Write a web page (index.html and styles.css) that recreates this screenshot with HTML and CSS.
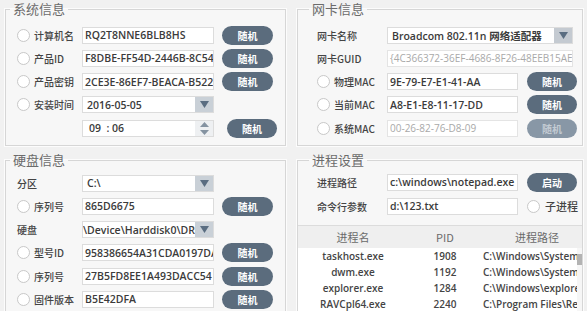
FILE: index.html
```html
<!DOCTYPE html>
<html>
<head>
    <meta charset="utf-8">
    <link rel="stylesheet" href="styles.css">
</head>
<body>
    <div class="main">
        <!-- 系统信息 -->
        <fieldset class="panel">
            <legend>系统信息</legend>
            <div class="rows">
                <div class="row">
                    <span class="lead"><i class="radio"></i>计算机名</span>
                    <span class="field">RQ2T8NNE6BLB8HS</span>
                    <button class="btn">随机</button>
                </div>
                <div class="row">
                    <span class="lead"><i class="radio"></i>产品ID</span>
                    <span class="field">F8DBE-FF54D-2446B-8C54</span>
                    <button class="btn">随机</button>
                </div>
                <div class="row">
                    <span class="lead"><i class="radio"></i>产品密钥</span>
                    <span class="field">2CE3E-86EF7-BEACA-B522</span>
                    <button class="btn">随机</button>
                </div>
                <div class="row">
                    <span class="lead"><i class="radio"></i>安装时间</span>
                    <span class="field pick"><span class="val">2016-05-05</span><span class="drop"><svg width="9" height="7" viewBox="0 0 9 7"><path d="M0 0H9L4.5 7Z"/></svg></span></span>
                </div>
                <div class="row">
                    <span class="lead"></span>
                    <span class="field pick time"><span class="val">09 &nbsp;: 06</span><span class="spin"><svg width="9" height="13" viewBox="0 0 9 13"><path d="M0 5H9L4.5 0Z"/><path d="M0 8H9L4.5 13Z"/></svg></span></span>
                    <button class="btn shift">随机</button>
                </div>
            </div>
        </fieldset>

        <!-- 网卡信息 -->
        <fieldset class="panel right">
            <legend>网卡信息</legend>
            <div class="rows">
                <div class="row">
                    <span class="lead">网卡名称</span>
                    <span class="field wide pick"><span class="val">Broadcom 802.11n 网络适配器</span><span class="drop grey"><svg width="9" height="7" viewBox="0 0 9 7"><path d="M0 0H9L4.5 7Z"/></svg></span></span>
                </div>
                <div class="row">
                    <span class="lead">网卡GUID</span>
                    <span class="field wide off">{4C366372-36EF-4686-8F26-48EEB15AE1D0}</span>
                </div>
                <div class="row">
                    <span class="lead"><i class="radio"></i>物理MAC</span>
                    <span class="field">9E-79-E7-E1-41-AA</span>
                    <button class="btn">随机</button>
                </div>
                <div class="row">
                    <span class="lead"><i class="radio"></i>当前MAC</span>
                    <span class="field">A8-E1-E8-11-17-DD</span>
                    <button class="btn">随机</button>
                </div>
                <div class="row">
                    <span class="lead"><i class="radio"></i>系统MAC</span>
                    <span class="field off">00-26-82-76-D8-09</span>
                    <button class="btn dim">随机</button>
                </div>
            </div>
        </fieldset>

        <!-- 硬盘信息 -->
        <fieldset class="panel">
            <legend>硬盘信息</legend>
            <div class="rows low">
                <div class="row">
                    <span class="lead">分区</span>
                    <span class="field pick"><span class="val">C:\</span><span class="drop"><svg width="9" height="7" viewBox="0 0 9 7"><path d="M0 0H9L4.5 7Z"/></svg></span></span>
                </div>
                <div class="row">
                    <span class="lead"><i class="radio"></i>序列号</span>
                    <span class="field">865D6675</span>
                    <button class="btn">随机</button>
                </div>
                <div class="row">
                    <span class="lead">硬盘</span>
                    <span class="field pick"><span class="val tight">\Device\Harddisk0\DR0</span><span class="drop"><svg width="9" height="7" viewBox="0 0 9 7"><path d="M0 0H9L4.5 7Z"/></svg></span></span>
                </div>
                <div class="row">
                    <span class="lead"><i class="radio"></i>型号ID</span>
                    <span class="field">958386654A31CDA0197DA3</span>
                    <button class="btn">随机</button>
                </div>
                <div class="row">
                    <span class="lead"><i class="radio"></i>序列号</span>
                    <span class="field">27B5FD8EE1A493DACC54</span>
                    <button class="btn">随机</button>
                </div>
                <div class="row">
                    <span class="lead"><i class="radio"></i>固件版本</span>
                    <span class="field">B5E42DFA</span>
                    <button class="btn">随机</button>
                </div>
            </div>
        </fieldset>

        <!-- 进程设置 -->
        <fieldset class="panel right">
            <legend>进程设置</legend>
            <div class="rows proc-rows">
                <div class="row">
                    <span class="lead">进程路径</span>
                    <span class="field">c:\windows\notepad.exe</span>
                    <button class="btn">启动</button>
                </div>
                <div class="row">
                    <span class="lead">命令行参数</span>
                    <span class="field">d:\123.txt</span>
                    <span class="check"><i class="radio"></i>子进程</span>
                </div>
            </div>

            <div class="list">
                <div class="thead">
                    <span class="c1">进程名</span>
                    <span class="c2">PID</span>
                    <span class="c3">进程路径</span>
                </div>
                <div class="tbody">
                    <div class="tlist">
                        <div class="trow"><span class="c1">taskhost.exe</span><span class="c2">1908</span><span class="c3">C:\Windows\System32\taskhost.exe</span></div>
                        <div class="trow"><span class="c1">dwm.exe</span><span class="c2">1192</span><span class="c3">C:\Windows\System32\dwm.exe</span></div>
                        <div class="trow"><span class="c1">explorer.exe</span><span class="c2">1284</span><span class="c3">C:\Windows\explorer.exe</span></div>
                        <div class="trow"><span class="c1">RAVCpl64.exe</span><span class="c2">2240</span><span class="c3">C:\Program Files\Realtek</span></div>
                    </div>
                    <div class="sbar"><div class="thumb"></div></div>
                </div>
            </div>
        </fieldset>
    </div>
</body>
</html>
```

FILE: styles.css
```css
/* Base */
* {
    box-sizing: border-box;
}

body {
    margin: 0;
    background-color: #f1f1f1;
    font-family: "Noto Sans CJK SC", sans-serif;
    font-size: 10px;
    color: #4a4a4a;
    overflow: hidden;
}

/* Four group boxes */
.main {
    display: grid;
    grid-template-columns: 281px 286px;
    grid-template-rows: 146px 200px;
    column-gap: 11px;
    row-gap: 5px;
    padding-left: 5px;
    width: 587px;
    height: 311px;
    overflow: hidden;
}

.panel {
    margin: 0;
    padding: 0;
    min-width: 0;
    border: 1px solid #d6d6d6;
    background-color: #f7f7f7;
    box-shadow: 0 0 0 1px #fcfcfc;
}

.panel legend {
    margin-left: 4px;
    padding: 0 3px;
    font-size: 13px;
    line-height: 18px;
    color: #6b6b6b;
}

.right legend {
    margin-left: 11px;
}

/* Rows of label / field / button */
.rows {
    display: flex;
    flex-direction: column;
    gap: 6.3px;
    padding: 8.5px 0 0 11px;
}

.rows.low {
    padding-top: 5.5px;
}

.right .rows {
    padding-left: 18px;
}

.rows.proc-rows {
    padding-top: 4.5px;
    gap: 7px;
}

.row {
    display: flex;
    align-items: center;
    height: 17px;
}

.lead {
    display: flex;
    align-items: center;
    gap: 4px;
    flex: none;
    width: 65px;
    white-space: nowrap;
    font-weight: 500;
    color: #444;
}

.right .lead {
    width: 71px;
    padding-left: 1px;
}

.radio {
    flex: none;
    width: 13px;
    height: 13px;
    border: 1px solid #c8c8c8;
    border-radius: 50%;
    background-color: #fff;
}

.field {
    display: flex;
    align-items: center;
    flex: none;
    width: 132px;
    height: 17px;
    padding-left: 2px;
    border: 1px solid #dcdcdc;
    background-color: #fff;
    font-family: "Open Sans", "Noto Sans CJK SC", sans-serif;
    font-weight: 600;
    font-size: 10.5px;
    color: #3b3b3b;
    white-space: nowrap;
    overflow: hidden;
}

.right .field {
    width: 131px;
}

.right .field.wide {
    width: 186px;
}

.field.off {
    font-weight: 400;
    font-size: 10px;
    color: #a9a9a9;
    border-color: #e4e4e4;
}

/* Combo boxes and spinner */
.field.pick {
    padding-left: 0;
}

.pick .val {
    flex: 1;
    min-width: 0;
    padding-left: 4px;
    overflow: hidden;
}

.pick .val.tight {
    padding-left: 0;
}

.time .val {
    padding-left: 6px;
}

.drop {
    display: flex;
    align-items: center;
    justify-content: center;
    flex: none;
    width: 18px;
    height: 100%;
    background-color: #c9d0d7;
    fill: #5a6d81;
}

.drop.grey {
    background-color: #c4cad1;
}

.spin {
    display: flex;
    align-items: center;
    justify-content: center;
    flex: none;
    width: 18px;
    height: 100%;
    background-color: #eef0f2;
    fill: #8593a1;
}

/* Buttons */
.btn {
    flex: none;
    width: 51px;
    height: 19px;
    margin-left: 8px;
    padding: 0;
    border: none;
    border-radius: 10px;
    background-color: #5b6c7d;
    color: #fff;
    font-family: "Noto Sans CJK SC", sans-serif;
    font-weight: 700;
    font-size: 10px;
}

.right .btn {
    width: 50px;
    margin-left: 9px;
}

.btn.shift {
    width: 50px;
    margin-left: 13px;
}

.btn.dim {
    background-color: #8897a6;
    color: #c3cbd3;
}

.check {
    display: flex;
    align-items: center;
    gap: 5px;
    margin-left: 9px;
    font-size: 11px;
    font-weight: 500;
    color: #444;
}

/* Process list */
.list {
    margin-top: 10.5px;
    border-top: 1px solid #dcdcdc;
}

.thead {
    display: flex;
    align-items: center;
    height: 22px;
    background-color: #efefef;
    font-size: 11px;
    color: #6a6a6a;
}

.tbody {
    display: flex;
    background-color: #fff;
    height: 80px;
}

.tlist {
    flex: 1;
    min-width: 0;
}

.trow {
    display: flex;
    align-items: center;
    height: 16px;
    font-family: "Open Sans", sans-serif;
    font-weight: 600;
    font-size: 10px;
    color: #444;
}

.c1 {
    flex: none;
    width: 110px;
    text-align: center;
}

.c2 {
    flex: none;
    width: 74px;
    text-align: center;
}

.c3 {
    flex: 1;
    min-width: 0;
    padding-left: 1px;
    white-space: nowrap;
    overflow: hidden;
}

.thead .c3 {
    padding-left: 10px;
    text-align: center;
}

.sbar {
    flex: none;
    width: 5px;
    background-color: #f6f6f6;
}

.thumb {
    height: 11px;
    margin-top: 6px;
    background-color: #b3b3b3;
}
```
